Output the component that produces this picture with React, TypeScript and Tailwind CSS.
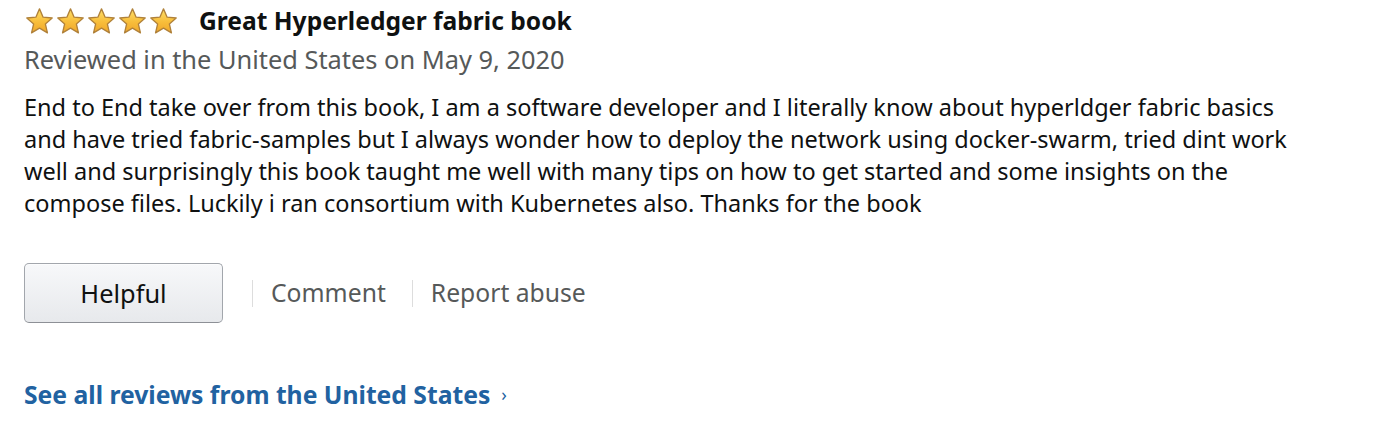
import React from "react";

const Star = ({ id }: { id: number }) => (
  <svg width="31" height="28" viewBox="0 0 32 30">
    <defs>
      <linearGradient id={`sg${id}`} x1="0" y1="0" x2="0" y2="1">
        <stop offset="0" stopColor="#fde06a" />
        <stop offset="0.55" stopColor="#f8bd3a" />
        <stop offset="1" stopColor="#f0a72a" />
      </linearGradient>
    </defs>
    <path
      d="M16 2 L19.9 10.9 L29.6 11.8 L22.3 18.2 L24.5 27.7 L16 22.7 L7.5 27.7 L9.7 18.2 L2.4 11.8 L12.1 10.9 Z"
      fill={`url(#sg${id})`}
      stroke="#b0813a"
      strokeWidth="1.4"
      strokeLinejoin="round"
    />
  </svg>
);

const lines = [
  "End to End take over from this book, I am a software developer and I literally know about hyperldger fabric basics",
  "and have tried fabric-samples but I always wonder how to deploy the network using docker-swarm, tried dint work",
  "well and surprisingly this book taught me well with many tips on how to get started and some insights on the",
  "compose files. Luckily i ran consortium with Kubernetes also. Thanks for the book",
];

const App: React.FC = () => {
  return (
    <div
      className="w-[1378px] h-[430px] bg-white px-6 pt-[5px] text-[#0f1111]"
      style={{ fontFamily: "'Noto Sans', Lato, sans-serif" }}
    >
      <div className="flex items-center h-[32px]">
        <div className="flex gap-0">
          {[0, 1, 2, 3, 4].map((i) => (
            <Star key={i} id={i} />
          ))}
        </div>
        <span className="ml-[20px] text-[24.6px] font-bold leading-none">
          Great Hyperledger fabric book
        </span>
      </div>
      <div className="mt-[6px] text-[25.4px] leading-[32px] text-[#565959]">
        Reviewed in the United States on May 9, 2020
      </div>
      <div className="mt-[16px] text-[23.5px] leading-[32px]">
        {lines.map((l, i) => (
          <div key={i}>{l}</div>
        ))}
      </div>
      <div className="mt-[44px] flex items-center">
        <button className="w-[199px] h-[60px] rounded-[5px] border border-[#a2a6ac] border-b-[#8d9096] bg-gradient-to-b from-[#f7f8fa] to-[#e7e9ec] text-[25.4px] text-[#0f1111] shadow-[0_1px_0_rgba(255,255,255,0.6)_inset]">
          Helpful
        </button>
        <div className="ml-[29px] w-px h-[27px] bg-[#dddddd]" />
        <span className="ml-[18px] text-[24.7px] text-[#565959]">Comment</span>
        <div className="ml-[26px] w-px h-[27px] bg-[#dddddd]" />
        <span className="ml-[18px] text-[24.7px] text-[#565959]">Report abuse</span>
      </div>
      <div className="mt-[53px] flex items-center text-[#2162a1]">
        <span className="text-[24.7px] font-bold">See all reviews from the United States</span>
        <span className="ml-[11px] text-[18px]">›</span>
      </div>
    </div>
  );
};

export default App;
